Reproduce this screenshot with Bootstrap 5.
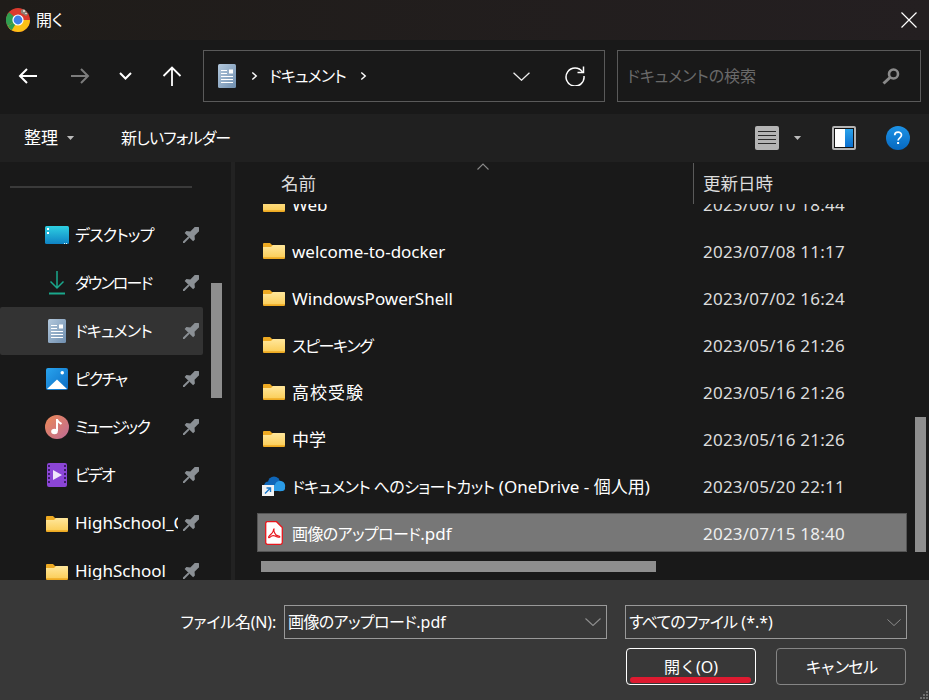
<!DOCTYPE html>
<html lang="ja">
<head>
  <meta charset="UTF-8" />
  <meta name="viewport" content="width=device-width, initial-scale=1.0" />
  <title>開く</title>
  <link href="https://cdn.jsdelivr.net/npm/bootstrap@5.3.2/dist/css/bootstrap.min.css" rel="stylesheet">
  <style>
    html, body { height: 100%; }
    body {
      width: 929px; height: 700px; overflow: hidden; background: #191919; color: #fff;
      font-family: "Noto Sans", "Noto Sans CJK JP", sans-serif;
      font-size: 17px; line-height: 24px; font-feature-settings: "palt";
    }
    svg { display: block; flex: none; }
    /* kana is narrower in the original UI font */
    .k0 { font-size: 16px; letter-spacing: -.6px; }
    .k1 { font-size: 16px; letter-spacing: -.8px; }
    .k2 { font-size: 16px; letter-spacing: -1.3px; }
    .k3 { font-size: 16px; letter-spacing: -1.8px; }
    .kw { letter-spacing: 1px; }
    .bar-title { height: 40px; padding-left: 6px; background: linear-gradient(90deg, #1f1c19, #241f21); font-size: 16px; }
    .bar-title .t { margin-left: 6px; }
    .bar-close { margin-left: auto; margin-right: 12px; }
    .bar-nav { height: 74px; background: #191919; padding: 10px 8px 12px 18px; }
    .nav-slot-1 { margin-left: 34px; }
    .nav-slot-2 { margin-left: 29px; }
    .nav-slot-3 { margin-left: 30px; }
    .box-addr { width: 402px; height: 52px; margin-left: 21px; border: 1px solid #5a5a5a; padding: 0 19px 0 14px; }
    .addr-chev { margin-left: 15px; }
    .box-addr .t { margin: 0 14px 0 11px; }
    .box-search { width: 304px; height: 52px; margin-left: 12px; border: 1px solid #5a5a5a; padding: 0 20px 0 9px; color: #6a6a6a; font-size: 16px; }
    .bar-cmd { height: 48px; background: #202020; padding: 0 19px 0 24px; }
    .cmd-new { margin-left: 46px; }
    .pane-main { height: 418px; }
    .pane-side { width: 231px; position: relative; overflow: hidden; }
    .side-rule { height: 2px; margin: 24px 39px 23px 10px; background: #3a3a3a; }
    .side-row { height: 48px; width: 203px; padding-left: 46px; border-radius: 2px; }
    .side-row.on { background: #333; }
    .side-ico { width: 22px; }
    .side-name { width: 103px; margin-left: 7px; overflow: hidden; white-space: nowrap; }
    .side-pin { margin-left: 5px; }
    .side-thumb { position: absolute; left: 211px; top: 121px; width: 11px; height: 115px; background: #8e8e8e; }
    .pane-split { width: 4px; background: #222; }
    .pane-files { flex: 1; position: relative; overflow: hidden; }
    .head-row { height: 42px; padding-left: 46px; color: #dcdcdc; font-size: 17.500px; }
    .head-name { width: 412px; padding-top: 9px; }
    .head-date { height: 41px; margin-top: 1px; border-left: 1px solid #5a5a5a; padding: 8px 0 0 9px; }
    .sort-caret { position: absolute; left: 242px; top: 1px; }
    .list-clip { height: 376px; overflow: hidden; }
    .file-list { margin-top: -20px; padding-left: 22px; display: flex; flex-direction: column; gap: 8px; }
    .file-row { height: 39px; width: 650px; padding-left: 5px; border: 1px solid transparent; white-space: nowrap; }
    .file-row.on { background: #777; border-color: #555; }
    .file-ico { width: 22px; }
    .file-name { width: 411px; margin-left: 7px; }
    .file-row .file-name, .file-row .file-date { padding-top: 3px; }
    .file-date { color: #dcdcdc; letter-spacing: .22px; }
    .file-row.on .file-date { color: #eee; }
    .vthumb { position: absolute; left: 680px; top: 255px; width: 11px; height: 135px; background: #8e8e8e; }
    .hthumb { position: absolute; left: 26px; top: 399px; width: 395px; height: 11px; background: #8e8e8e; }
    .pane-foot { height: 120px; background: #383838; position: relative; padding: 25px 22px 0 0; }
    .foot-label { margin-right: 8px; font-size: 16px; letter-spacing: -.2px; }
    .foot-field { height: 34px; border: 1px solid #999; padding: 0 3px; background: #383838; font-size: 16px; }
    .foot-field svg { margin-right: 2px; }
    .field-name { width: 323px; }
    .field-type { width: 282px; margin-left: 18px; }
    .foot-btns { gap: 20px; margin-top: 9px; padding-right: 1px; }
    .foot-btn {
      --bs-btn-color: #fff; --bs-btn-bg: #383838; --bs-btn-border-color: #858585;
      --bs-btn-hover-color: #fff; --bs-btn-hover-bg: #444; --bs-btn-hover-border-color: #858585;
      --bs-btn-border-radius: 4px; --bs-btn-font-size: 16px; --bs-btn-padding-y: 0; --bs-btn-padding-x: 0;
      width: 130px; height: 37px; position: relative; font-family: inherit;
    }
    .foot-btn.primary-act { --bs-btn-border-color: #fff; }
    .red-line { position: absolute; left: 3px; top: 28px; width: 121px; height: 6px; border-radius: 3px; background: #de1a30; }
    .grip { position: absolute; right: 0; bottom: 0; }
  </style>
</head>
<body>
  <svg width="0" height="0" class="position-absolute">
    <defs>
      <linearGradient id="gFolder" x1="0" y1="0" x2="0" y2="1"><stop offset="0" stop-color="#ffe79c"/><stop offset="1" stop-color="#fbcf5c"/></linearGradient>
      <linearGradient id="gDoc" x1="0" y1="0" x2="1" y2="1"><stop offset="0" stop-color="#b3c8dc"/><stop offset="1" stop-color="#6f8eaf"/></linearGradient>
      <linearGradient id="gDesk" x1="0" y1="0" x2="0" y2="1"><stop offset="0" stop-color="#2ed0e2"/><stop offset="1" stop-color="#0f83c4"/></linearGradient>
      <linearGradient id="gPic" x1="0" y1="0" x2="1" y2="1"><stop offset="0" stop-color="#29a4ee"/><stop offset="1" stop-color="#0b6cc4"/></linearGradient>
      <linearGradient id="gMusic" x1="0" y1="0" x2="1" y2="1"><stop offset="0" stop-color="#ee8a56"/><stop offset="1" stop-color="#bc6a96"/></linearGradient>
      <linearGradient id="gHelp" x1="0" y1="0" x2="0" y2="1"><stop offset="0" stop-color="#1d93e6"/><stop offset="1" stop-color="#0668c0"/></linearGradient>
      <linearGradient id="gPane" x1="0" y1="0" x2="0" y2="1"><stop offset="0" stop-color="#2aa2ea"/><stop offset="1" stop-color="#0a6fd0"/></linearGradient>
      <symbol id="folder" viewBox="0 0 22 17">
        <path d="M0 2a1 1 0 0 1 1-1h6l2 2h12a1 1 0 0 1 1 1v12a1 1 0 0 1-1 1H1a1 1 0 0 1-1-1z" fill="#eeaa22"/>
        <path d="M0 5h8l2-2h11a1 1 0 0 1 1 1v11.200H0z" fill="url(#gFolder)"/>
      </symbol>
      <symbol id="pin" viewBox="0 0 16 16">
        <g transform="rotate(45 8 8)" fill="#8b9095">
          <path d="M3.500-3h9v3h-1.500v6l3 2.500v2.500H2V8.500L5 6V0H3.500z"/>
          <path d="M7 11h2v9H7z"/>
        </g>
      </symbol>
      <symbol id="doc" viewBox="0 0 18 24">
        <rect width="18" height="24" rx="1.500" fill="url(#gDoc)"/>
        <path d="M3 6.500h6M3 9.500h6M3 12.500h12M3 15.500h12M3 18.500h12" stroke="#fff" stroke-width="1"/>
        <rect x="11" y="5.500" width="4" height="4" fill="#fff"/>
      </symbol>
      <symbol id="chev-r" viewBox="0 0 8 10"><path d="M1.500 1 6 5 1.500 9" fill="none" stroke="#fff" stroke-width="1.600"/></symbol>
      <symbol id="chev-d" viewBox="0 0 16 8"><path d="M.5.5 8 7.500 15.500.5" fill="none" stroke="#8f8f8f" stroke-width="1.100"/></symbol>
      <symbol id="caret" viewBox="0 0 9 5"><path d="M0 0h9L4.500 5z" fill="#bbb"/></symbol>
    </defs>
  </svg>

  <div class="bar-title d-flex align-items-center">
    <svg width="24" height="24" viewBox="0 0 24 24">
      <circle cx="12" cy="12" r="12" fill="#db3a2e"/>
      <path d="M12 12 1.600 18A12 12 0 0 1 3 4.200z" fill="#2f9e4f"/>
      <path d="M12 12h12a12 12 0 0 1-12 12 12 12 0 0 1-10.400-6z" fill="#fbc116"/>
      <path d="M12 12 5.800 22.300A12 12 0 0 1 1.600 18z" fill="#2f9e4f"/>
      <circle cx="12" cy="12" r="5.600" fill="#fff"/>
      <circle cx="12" cy="12" r="4.400" fill="#3f7fe8"/>
      <path d="M15 2l3-1 2 2 2 3-2 2-3-2-2-1z" fill="#8d8378"/>
      <path d="M17 2h2v2h-2zM19 5h2v1h-2z" fill="#d8d3cb"/>
    </svg>
    <span class="t">開く</span>
    <svg class="bar-close" width="16" height="16" viewBox="0 0 16 16"><path d="M.5.5l15 15M15.500.5l-15 15" stroke="#fff" stroke-width="1.200"/></svg>
  </div>

  <div class="bar-nav d-flex align-items-center">
    <svg width="19" height="16" viewBox="0 0 19 16"><path d="M19 8H2M9 1 2 8l7 7" fill="none" stroke="#fff" stroke-width="2"/></svg>
    <svg class="nav-slot-1" width="19" height="16" viewBox="0 0 19 16"><path d="M0 8h17M10 1l7 7-7 7" fill="none" stroke="#7c7c7c" stroke-width="2"/></svg>
    <svg class="nav-slot-2" width="13" height="8" viewBox="0 0 13 8"><path d="M1 1l5.500 5.500L12 1" fill="none" stroke="#fff" stroke-width="2"/></svg>
    <svg class="nav-slot-3" width="20" height="20" viewBox="0 0 20 20"><path d="M10 20V2M1.500 10l8.500-8.500 8.500 8.500" fill="none" stroke="#fff" stroke-width="1.800"/></svg>
    <div class="box-addr d-flex align-items-center">
      <svg width="18" height="24"><use href="#doc"/></svg>
      <svg class="addr-chev" width="7" height="10"><use href="#chev-r"/></svg>
      <span class="t k1">ドキュメント</span>
      <svg width="7" height="10"><use href="#chev-r"/></svg>
      <svg class="ms-auto" width="17" height="9" viewBox="0 0 16 8"><path d="M.5.500 8 7.500 15.500.5" fill="none" stroke="#eee" stroke-width="1.200"/></svg>
      <svg style="margin-left:35px" width="20" height="20" viewBox="0 0 20 20"><path d="M17.500 6A9 9 0 1 0 19 10" fill="none" stroke="#fff" stroke-width="1.500"/><path d="M18.500.5V6.500H12.500" fill="none" stroke="#fff" stroke-width="1.500"/></svg>
    </div>
    <div class="box-search d-flex align-items-center">
      <span>ドキュメントの検索</span>
      <svg class="ms-auto" width="18" height="17" viewBox="0 0 18 17"><circle cx="11.500" cy="6" r="4.500" fill="none" stroke="#8a8a8a" stroke-width="2.600"/><path d="M8 9.500 1.500 15.500" stroke="#8a8a8a" stroke-width="3"/></svg>
    </div>
  </div>

  <div class="bar-cmd d-flex align-items-center">
    <span>整理</span>
    <svg class="ms-2" width="9" height="4"><use href="#caret"/></svg>
    <span class="cmd-new k1">新しいフォルダー</span>
    <svg class="ms-auto" width="24" height="24" viewBox="0 0 24 24"><rect width="24" height="24" rx="2" fill="#b4b4b4"/><path d="M3 5.500h18M3 9.500h18M3 13.500h18M3 17.500h18" stroke="#2a2a2a" stroke-width="1"/></svg>
    <svg style="margin-left:14px" width="9" height="4"><use href="#caret"/></svg>
    <svg style="margin-left:30px" width="24" height="24" viewBox="0 0 24 24"><rect width="24" height="24" rx="2" fill="#b4b4b4"/><rect x="2" y="2" width="20" height="20" fill="#111"/><rect x="3" y="3" width="10" height="18" fill="#fff"/><rect x="13" y="3" width="8" height="18" fill="url(#gPane)"/></svg>
    <svg style="margin-left:30px" width="24" height="24" viewBox="0 0 24 24"><circle cx="12" cy="12" r="12" fill="url(#gHelp)"/><path d="M8.700 9.300c0-4.300 6.800-4.300 6.800-.2 0 2.700-3.400 2.700-3.400 5.400" fill="none" stroke="#fff" stroke-width="1.700"/><rect x="11.100" y="16" width="2" height="2" fill="#fff"/></svg>
  </div>

  <div class="pane-main d-flex">
    <div class="pane-side" id="sidebar">
      <div class="side-rule"></div>
      <div class="side-thumb"></div>
    </div>
    <div class="pane-split"></div>
    <div class="pane-files">
      <div class="head-row d-flex">
        <div class="head-name">名前</div>
        <div class="head-date">更新日時</div>
      </div>
      <svg class="sort-caret" width="12" height="7" viewBox="0 0 12 7"><path d="M.5 6.500 6 1l5.500 5.500" fill="none" stroke="#8a8a8a" stroke-width="1.100"/></svg>
      <div class="list-clip"><div class="file-list" id="files"></div></div>
      <div class="vthumb"></div>
      <div class="hthumb"></div>
    </div>
  </div>

  <div class="pane-foot">
    <div class="d-flex justify-content-end align-items-center">
      <span class="foot-label">ファイル名(N):</span>
      <div class="foot-field field-name d-flex align-items-center justify-content-between"><span><span class="k0">画像のアップロード</span>.pdf</span><svg width="16" height="8"><use href="#chev-d"/></svg></div>
      <div class="foot-field field-type d-flex align-items-center justify-content-between"><span><span class="k1">すべてのファイル</span> (*.*)</span><svg width="14" height="7"><use href="#chev-d"/></svg></div>
    </div>
    <div class="foot-btns d-flex justify-content-end">
      <button type="button" class="btn foot-btn primary-act">開く(O)<span class="red-line"></span></button>
      <button type="button" class="btn foot-btn"><span class="k3">キャンセル</span></button>
    </div>
    <svg class="grip" width="10" height="9" viewBox="0 0 10 9" fill="#6e6e6e"><path d="M7 0h2v2H7zM4 3h2v2H4zM7 3h2v2H7zM1 6h2v2H1zM4 6h2v2H4zM7 6h2v2H7z"/></svg>
  </div>

  <script>
    const use = (id, w, h) => `<svg width="${w}" height="${h}"><use href="#${id}"/></svg>`;
    const sideIcons = {
      desk: `<svg width="24" height="18" viewBox="0 0 24 18"><rect width="24" height="18" rx="1.500" fill="url(#gDesk)"/><path d="M2 2h2v2H2zM2 6h2v2H2z" fill="#fff"/><path d="M19 17h1v1h-1zM21 17h1v1h-1z" fill="#dff"/></svg>`,
      down: `<svg width="18" height="24" viewBox="0 0 18 24"><path d="M9 0v17M2.500 10.500 9 17l6.500-6.500" fill="none" stroke="#1aa88c" stroke-width="1.500"/><path d="M1 22.500h16" stroke="#1aa88c" stroke-width="2"/></svg>`,
      doc: use("doc", 18, 24),
      pic: `<svg width="22" height="22" viewBox="0 0 22 22"><rect width="22" height="22" rx="2" fill="url(#gPic)"/><path d="M1 21 11 11.500 21 21z" fill="#fff"/><rect x="14.500" y="3" width="3.500" height="3.500" rx="1.700" fill="#fff"/></svg>`,
      music: `<svg width="24" height="24" viewBox="0 0 24 24"><circle cx="12" cy="12" r="12" fill="url(#gMusic)"/><path d="M12 4.500c1 3 3 3.500 4.500 4.500" fill="none" stroke="#fff" stroke-width="2"/><path d="M12 4v12" stroke="#fff" stroke-width="2"/><ellipse cx="9.500" cy="16.500" rx="3.300" ry="2.700" fill="#fff"/></svg>`,
      video: `<svg width="20" height="24" viewBox="0 0 20 24"><rect width="20" height="24" rx="2" fill="#8b45d6"/><path d="M1 2h2v2H1zM1 6h2v2H1zM1 10h2v2H1zM1 14h2v2H1zM1 18h2v2H1zM17 2h2v2h-2zM17 6h2v2h-2zM17 10h2v2h-2zM17 14h2v2h-2zM17 18h2v2h-2z" fill="#3c1d66"/><path d="M6 7l9 5-9 5z" fill="#efe6fb"/></svg>`,
      folder: use("folder", 22, 17)
    };
    const sideRows = [
      ["desk", '<span class="k1">デスクトップ</span>'], ["down", '<span class="k3">ダウンロード</span>'],
      ["doc", '<span class="k1">ドキュメント</span>', true], ["pic", '<span class="k2">ピクチャ</span>'],
      ["music", '<span class="k3">ミュージック</span>'], ["video", '<span class="k3">ビデオ</span>'],
      ["folder", "HighSchool_Club"], ["folder", "HighSchool"]
    ];
    const sidebar = document.getElementById("sidebar");
    const thumb = sidebar.querySelector(".side-thumb");
    sideRows.forEach(r => {
      const row = document.createElement("div");
      row.className = "side-row d-flex align-items-center" + (r[2] ? " on" : "");
      row.innerHTML = `<div class="side-ico d-flex justify-content-center">${sideIcons[r[0]]}</div><div class="side-name">${r[1]}</div>${use("pin", 16, 16).replace("<svg", '<svg class="side-pin"')}`;
      sidebar.insertBefore(row, thumb);
    });

    const cloud = `<svg width="24" height="20" viewBox="0 0 24 20"><circle cx="12" cy="6.500" r="6" fill="#0f66b8"/><circle cx="6.500" cy="10" r="4.500" fill="#0f66b8"/><circle cx="18" cy="10" r="5.200" fill="#2a9be6"/><rect x="9" y="9" width="14" height="6" rx="3" fill="#2a9be6"/><rect y="9" width="12" height="11" fill="#f2f2f2"/><path d="M3 17.500 8 12.500M4.500 12h4v4" fill="none" stroke="#1577cc" stroke-width="1.400"/></svg>`;
    const pdf = `<svg width="18" height="24" viewBox="0 0 18 24"><path d="M2 .7h9.500L17.300 6.500V21.500a1.800 1.800 0 0 1-1.800 1.800H2.500A1.800 1.800 0 0 1 .7 21.500V2.500A1.800 1.800 0 0 1 2 .7z" fill="#fff" stroke="#e8161c" stroke-width="1.300"/><path d="M9 8c-.6 2 .9 4.500 2 6 1.200 1 3.600.6 3.800 1.700.1 1-2.800.5-4.700-.6-1.700-1-3.800-.2-5 1-1.100 1.200-1.800.4-1.400-.4 1-1.600 3.500-3 4.400-5.300.6-1.500.3-2.500.9-2.400z" fill="none" stroke="#e8161c" stroke-width="1.200"/></svg>`;
    const files = [
      ["Web", "2023/06/10 18:44"],
      ["welcome-to-docker", "2023/07/08 11:17"],
      ["WindowsPowerShell", "2023/07/02 16:24"],
      ['<span class="k2">スピーキング</span>', "2023/05/16 21:26"],
      ['<span class="kw">高校受験</span>', "2023/05/16 21:26"],
      ["中学", "2023/05/16 21:26"],
      ['<span class="k0">ドキュメント へのショートカット</span> (OneDrive - 個人用)', "2023/05/20 22:11", cloud],
      ['<span class="k0">画像のアップロード</span>.pdf', "2023/07/15 18:40", pdf, true]
    ];
    const list = document.getElementById("files");
    files.forEach(f => {
      const row = document.createElement("div");
      row.className = "file-row d-flex align-items-center" + (f[3] ? " on" : "");
      row.innerHTML = `<div class="file-ico d-flex justify-content-center">${f[2] || use("folder", 22, 17)}</div><div class="file-name">${f[0]}</div><div class="file-date">${f[1]}</div>`;
      list.appendChild(row);
    });
  </script>
  <script src="https://cdn.jsdelivr.net/npm/bootstrap@5.3.2/dist/js/bootstrap.bundle.min.js"></script>
</body>
</html>
